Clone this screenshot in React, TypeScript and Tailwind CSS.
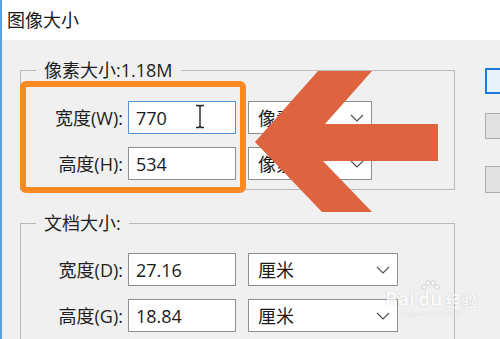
import React from 'react';

// 下拉箭头
function Chevron() {
  return (
    <svg width="14" height="8" viewBox="0 0 14 8" className="shrink-0">
      <polyline points="1,1 7,7 13,1" fill="none" stroke="#505050" strokeWidth="1.2" />
    </svg>
  );
}

function IBeam() {
  return (
    <svg width="10" height="25" viewBox="0 0 10 25" className="absolute left-[66px] top-[2px]">
      <path d="M1 1.5 H4 L5 3 L6 1.5 H9 M5 3 V22 M1 23.5 H4 L5 22 L6 23.5 H9" fill="none" stroke="#222" strokeWidth="1.4" />
    </svg>
  );
}

interface RowProps { label: string; value: string; unit: string; selectW: string; focused?: boolean; }

function Row({ label, value, unit, selectW, focused = false }: RowProps) {
  return (
    <div className="flex items-center h-[33px]">
      <span className="w-[87px] text-right text-[18px] leading-none text-[#1e1e1e]">{label}</span>
      <div className={`relative ml-[5px] w-[108px] h-full flex items-center pl-[7px] bg-white border ${focused ? 'border-[#4f95dc]' : 'border-[#8e8e8e]'} text-[18px] leading-none text-[#1a1a1a]`}>
        {value}
        {focused && <IBeam />}
      </div>
      <div className={`ml-[12px] ${selectW} h-full flex items-center justify-between pl-[9px] pr-[7px] bg-white border border-[#8e8e8e] text-[18px] leading-none text-[#1a1a1a]`}>
        <span>{unit}</span>
        <Chevron />
      </div>
    </div>
  );
}

export default function App() {
  return (
    <div className="relative w-[500px] h-[339px] overflow-hidden flex bg-[#f0f0f0] font-['Open_Sans','Noto_Sans_CJK_SC',sans-serif]">
      <div className="w-[2px] shrink-0 bg-[#5b9fe3]" />
      <div className="flex-1 flex flex-col">
        <header className="h-[40px] shrink-0 bg-white flex justify-between pl-[5px]">
          <span className="self-center text-[18px] leading-none text-[#1a1a1a]">图像大小</span>
          <div className="mt-[-3px] mr-[-6px] w-[52px] h-[9px] bg-white border border-[#d4d4d4]" />
        </header>

        <div className="flex pt-[20px] pl-[18px]">
          <div className="w-[435px] shrink-0 flex flex-col">
            <fieldset className="border border-[#b9b9b9] pl-[15px] pt-[21px] pb-[9px] flex flex-col gap-[13px]">
              <legend className="px-[8px] text-[18px] leading-[20px] text-[#1e1e1e]">像素大小:1.18M</legend>
              <Row label="宽度(W):" value="770" unit="像素" selectW="w-[124px]" focused />
              <Row label="高度(H):" value="534" unit="像素" selectW="w-[124px]" />
            </fieldset>

            <fieldset className="mt-[23px] border border-[#b9b9b9] pl-[15px] pt-[20px] pb-[12px] flex flex-col gap-[13px]">
              <legend className="px-[8px] text-[18px] leading-[20px] text-[#1e1e1e]">文档大小:</legend>
              <Row label="宽度(D):" value="27.16" unit="厘米" selectW="w-[150px]" />
              <Row label="高度(G):" value="18.84" unit="厘米" selectW="w-[150px]" />
            </fieldset>
          </div>

          <div className="ml-[30px] flex flex-col">
            <div className="mt-[8px] w-[80px] h-[26px] bg-[#e5f1fb] border-2 border-[#1f7ad8]" />
            <div className="mt-[19px] w-[80px] h-[26px] bg-[#e1e1e1] border border-[#adadad]" />
            <div className="mt-[27px] w-[80px] h-[27px] bg-[#e1e1e1] border border-[#adadad]" />
          </div>
        </div>
      </div>

      {/* 标注：橙色框 + 箭头 */}
      <div className="absolute left-[20px] top-[81px] w-[226px] h-[112px] border-[6px] border-[#fb8a24] rounded-[6px] pointer-events-none" />
      <svg width="500" height="339" viewBox="0 0 500 339" className="absolute left-0 top-0 pointer-events-none">
        <polygon points="255,142 318,71 372,71 325,124 438,124 438,161 323,161 372,212 322,212" fill="#de6440" />
      </svg>

      {/* 水印 */}
      <div className="absolute left-[385px] top-[280px] flex flex-col items-center opacity-70 pointer-events-none">
        <div className="flex items-end text-[19px] leading-none font-bold text-white [text-shadow:0_0_1px_#9a9a9a]">
          <span>Bai</span>
          <span className="ml-[3px] flex flex-col items-center">
            <svg width="20" height="10" viewBox="0 0 20 10">
              <g fill="#fff" stroke="#a8a8a8" strokeWidth="0.6">
                <circle cx="4" cy="7" r="2.2" />
                <circle cx="8" cy="3" r="2.2" />
                <circle cx="13" cy="3" r="2.2" />
                <circle cx="17" cy="7" r="2.2" />
              </g>
            </svg>
            <span>du</span>
          </span>
          <span className="ml-[3px] text-[16px]">经验</span>
        </div>
        <span className="mt-[1px] text-[7px] leading-none text-white [text-shadow:0_0_1px_#b0b0b0]">jingyan.baidu.com</span>
      </div>
    </div>
  );
}
